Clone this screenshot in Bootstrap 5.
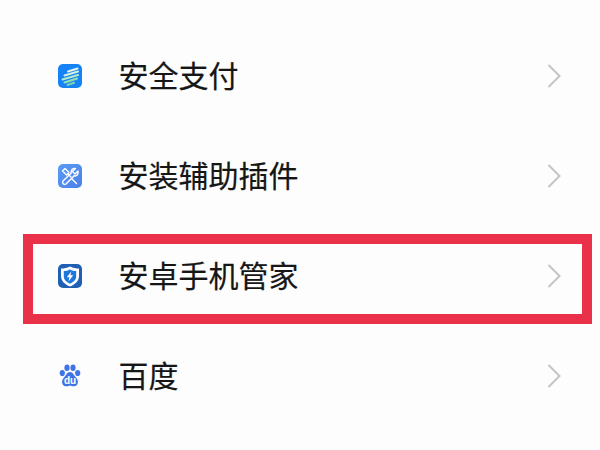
<!DOCTYPE html>
<html lang="zh">
<head>
<meta charset="utf-8">
<title>设置</title>
<link href="https://cdn.jsdelivr.net/npm/bootstrap@5.3.0/dist/css/bootstrap.min.css" rel="stylesheet">
<style>
html,body{width:600px;height:450px;overflow:hidden;background:#fdfdfd}
.menu-wrap{padding-top:26px}
.menu-list{--bs-list-group-bg:transparent;--bs-list-group-border-width:0;font-family:"Noto Sans CJK SC","Liberation Sans",sans-serif;font-size:30px;line-height:1}
.menu-row{height:100px;padding:0 39px 0 58px}
.menu-ico{width:24px;height:24px;flex:none;display:block}
.menu-txt{margin-left:36.500px;padding-bottom:4px;flex-grow:1;color:#161616;-webkit-text-stroke:.2px #161616}
.menu-chev{width:14px;height:24px;flex:none;display:block}
.hl-box{position:absolute;left:23px;top:234px;width:569px;height:90px;border:10px solid #e93249;pointer-events:none}
</style>
</head>
<body>
<div class="menu-wrap position-relative">
<div class="list-group list-group-flush menu-list">
  <div class="list-group-item d-flex align-items-center menu-row">
    <svg class="menu-ico" viewBox="0 0 24 24"><rect width="24" height="24" rx="5" fill="#1583f5"/><g stroke-width="2" stroke-linecap="round" fill="none"><path d="M10 7.500 19.500 4.500" stroke="#e4f7ec"/><path d="M6.500 11.500 20 7.500" stroke="#d4f2e0"/><path d="M4.500 15.500 20 11" stroke="#b4ecc8"/><path d="M6.500 18.500 19 14.500" stroke="#94e2b4"/><path d="M9.500 21 16 18.800" stroke="#7fd8a8"/></g></svg>
    <span class="menu-txt">安全支付</span>
    <svg class="menu-chev" viewBox="0 0 14 24"><path d="M1.500 1 12.500 12 1.500 23" fill="none" stroke="#c4c4c4" stroke-width="2"/></svg>
  </div>
  <div class="list-group-item d-flex align-items-center menu-row">
    <svg class="menu-ico" viewBox="0 0 24 24"><defs><linearGradient id="g1" x1="0" y1="0" x2="1" y2="1"><stop offset="0" stop-color="#5a9cf5"/><stop offset="1" stop-color="#4a7fe8"/></linearGradient></defs><rect width="24" height="24" rx="5" fill="url(#g1)"/><g fill="none" stroke="#fff" stroke-width="1.400" stroke-linecap="round" stroke-linejoin="round"><path d="M4.500 7 7 4.500 11 8.500 8.500 11Z"/><path d="M10 10 13 13"/><path d="M20 7 17 10 14.500 7.500 17.500 4.500C15 3.800 12.500 6 13.300 9L5 17C3.600 19 6 21.500 8 20L16.200 11.800C18.800 12.500 20.800 9.800 20 7Z"/><path d="M14 15 18.500 19.500"/></g></svg>
    <span class="menu-txt">安装辅助插件</span>
    <svg class="menu-chev" viewBox="0 0 14 24"><path d="M1.500 1 12.500 12 1.500 23" fill="none" stroke="#c4c4c4" stroke-width="2"/></svg>
  </div>
  <div class="list-group-item d-flex align-items-center menu-row">
    <svg class="menu-ico" viewBox="0 0 24 24"><rect width="24" height="24" rx="5" fill="#1f5fb4"/><path d="M12 2.500C15 4 18 4.500 21 4.500V12C21 17 17 20.500 12 22.500 7 20.500 3 17 3 12V4.500C6 4.500 9 4 12 2.500Z" fill="#fff"/><path d="M12 5.500C14.200 6.500 16.200 7 18.200 7V12.500C18.200 15.800 15.500 18 12 19.700 8.500 18 5.800 15.800 5.800 12.500V7C7.800 7 9.800 6.500 12 5.500Z" fill="#1e78dc"/><path d="M13.200 7.500 8.800 13.200H11.300L10.600 17.500 15.200 11.300H12.500Z" fill="#fff"/></svg>
    <span class="menu-txt">安卓手机管家</span>
    <svg class="menu-chev" viewBox="0 0 14 24"><path d="M1.500 1 12.500 12 1.500 23" fill="none" stroke="#c4c4c4" stroke-width="2"/></svg>
  </div>
  <div class="list-group-item d-flex align-items-center menu-row">
    <svg class="menu-ico" viewBox="0 0 24 24"><g fill="#3f74e6"><ellipse cx="4.300" cy="9" rx="2.600" ry="3.100"/><ellipse cx="9" cy="3.800" rx="2.600" ry="3.300"/><ellipse cx="15" cy="3.800" rx="2.600" ry="3.300"/><ellipse cx="19.700" cy="9" rx="2.600" ry="3.100"/><path d="M12 8C9 8 8.500 11 6 13.500 3 16.500 3.500 22 8 22.300 10 22.500 11 21.500 12 21.500S14 22.500 16 22.300C20.500 22 21 16.500 18 13.500 15.500 11 15 8 12 8Z"/></g><text x="12" y="19.500" text-anchor="middle" font-family="Liberation Sans,sans-serif" font-weight="700" font-size="10" fill="#fff">du</text></svg>
    <span class="menu-txt">百度</span>
    <svg class="menu-chev" viewBox="0 0 14 24"><path d="M1.500 1 12.500 12 1.500 23" fill="none" stroke="#c4c4c4" stroke-width="2"/></svg>
  </div>
</div>
<div class="hl-box"></div>
</div>
</body>
</html>
